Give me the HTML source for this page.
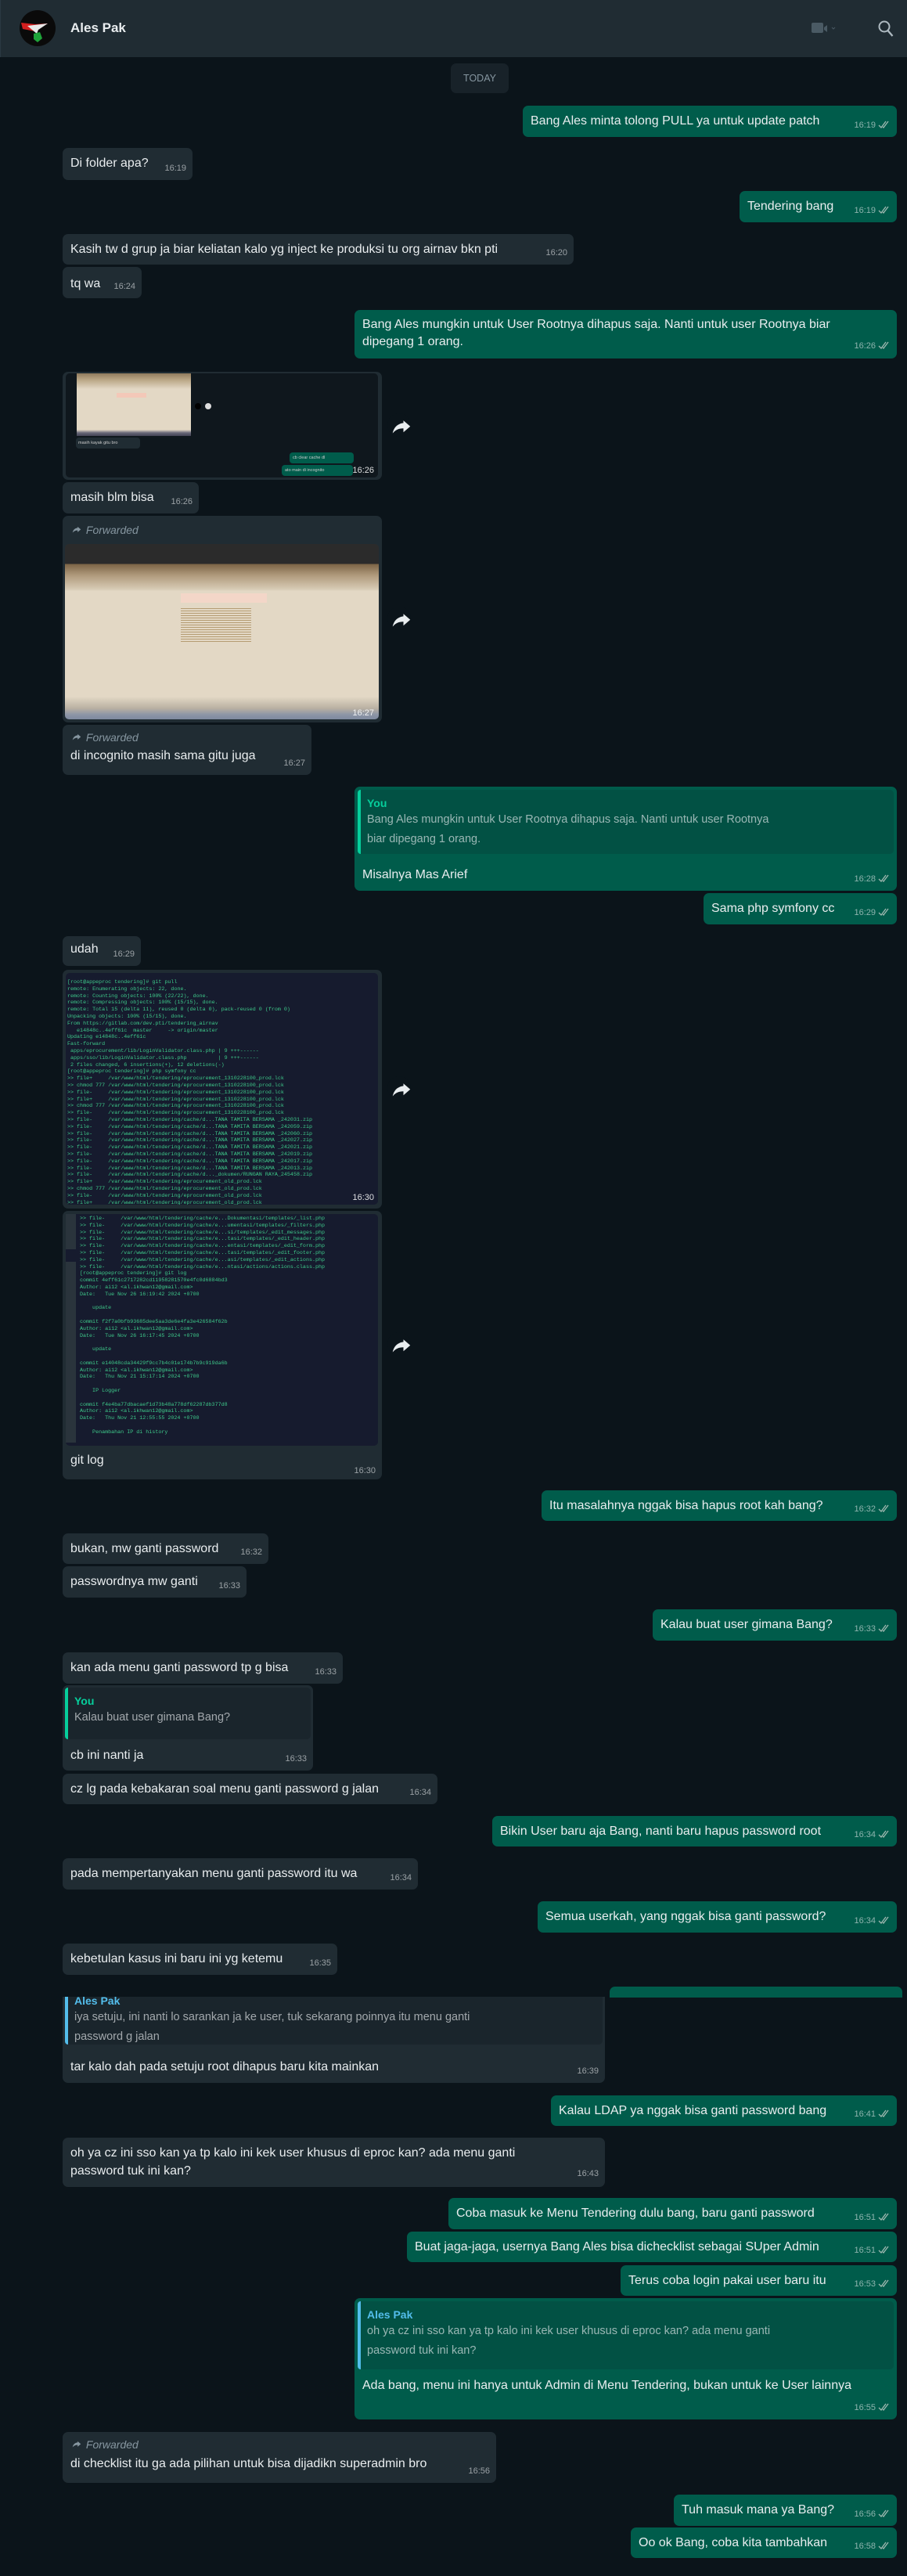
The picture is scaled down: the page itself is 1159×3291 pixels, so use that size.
<!DOCTYPE html>
<html><head><meta charset="utf-8">
<style>
*{box-sizing:border-box;margin:0;padding:0}
body{width:1159px;height:3291px;background:#0b141a;font-family:"Liberation Sans",sans-serif;position:relative;overflow:hidden;color:#e9edef}
.hdr{position:absolute;left:0;top:0;width:1159px;height:73px;background:#202c33;border-left:1px solid #2a3942}
.b{position:absolute;border-radius:7px;font-size:16px;line-height:20px;padding:10px 50px 0 10px;white-space:nowrap}
.in{background:#202c33;left:80px}
.out{background:#005c4b;right:13px}
.t{position:absolute;right:8px;bottom:5px;font-size:11px;color:rgba(233,237,239,.6);white-space:nowrap}
.ck{display:inline-block;vertical-align:-2px;margin-left:3px}
.q{position:absolute;border-radius:5px;padding:8px 10px 0 12px;font-size:14.5px;line-height:25px;color:rgba(233,237,239,.65);white-space:nowrap}
.q:before{content:"";position:absolute;left:0;top:0;bottom:0;width:4px;border-radius:5px 0 0 5px;background:var(--c)}
.qn{font-weight:bold;color:var(--c);font-size:14px;line-height:18px}
.fw{font-style:italic;color:#8696a0;font-size:14px}
.fb{position:absolute;width:30px;height:30px;border-radius:50%;background:#0b141a;left:495px}
.term{position:absolute;background:#161b2e;font-family:"Liberation Mono",monospace;font-size:6.7px;line-height:8.8px;color:#3ec98a;white-space:pre;overflow:hidden}
.bt{position:absolute;font-size:11px;color:rgba(255,255,255,.85)}
</style></head><body>
<svg width="0" height="0" style="position:absolute"><defs>
<symbol id="ck" viewBox="0 0 16 11"><path d="M1 6l3 3 6-8M6 8l1 1 6-8" fill="none" stroke="#9fb8b0" stroke-width="1.3"/></symbol>
<symbol id="fa" viewBox="0 0 24 24"><path d="M14 5l7 6-7 6v-4c-5 0-8 1.5-11 5 1-5 4-9.5 11-10.5z" fill="#e9edef"/></symbol>
</defs></svg>

<div class="hdr">
  <svg style="position:absolute;left:24px;top:13px" width="46" height="46" viewBox="0 0 46 46">
    <circle cx="23" cy="23" r="23" fill="#0a0a0a"/>
    <path d="M2 16l18 2 16-1-14 6-2 4-16-3z" fill="#d21f1f"/>
    <path d="M10 20l26-3-12 8-2 5z" fill="#e8e8e8"/>
    <path d="M18 30l8-2 3 8-6 5-5-4z" fill="#1fa33a"/>
  </svg>
  <div style="position:absolute;left:89px;top:26px;font-size:17px;font-weight:bold;color:#e9edef">Ales Pak</div>
  <svg style="position:absolute;left:1036px;top:27px" width="32" height="18" viewBox="0 0 32 18"><rect x="0" y="2" width="15" height="13" rx="2" fill="#4a5a64"/><path d="M16 8l4-3v9l-4-3z" fill="#4a5a64"/><path d="M26 8l2 2 2-2" stroke="#4a5a64" fill="none" stroke-width="1"/></svg>
  <svg style="position:absolute;left:1120px;top:25px" width="22" height="24" viewBox="0 0 22 24"><circle cx="9" cy="9" r="6.5" fill="none" stroke="#aebac1" stroke-width="2"/><path d="M13.5 14l6 7" stroke="#aebac1" stroke-width="2.3"/></svg>
</div>

<div style="position:absolute;left:576px;top:81px;width:74px;height:38px;background:#182229;border-radius:7px;color:#8696a0;font-size:12.5px;text-align:center;line-height:38px">TODAY</div>

<div class="b out" style="top:135px;width:478px;height:40px">Bang Ales minta tolong PULL ya untuk update patch<span class="t">16:19<svg class="ck" width="16" height="11"><use href="#ck"/></svg></span></div>
<div class="b in" style="top:189px;width:166px;height:41px">Di folder apa?<span class="t">16:19</span></div>
<div class="b out" style="top:244px;width:201px;height:40px">Tendering bang<span class="t">16:19<svg class="ck" width="16" height="11"><use href="#ck"/></svg></span></div>
<div class="b in" style="top:299px;width:653px;height:39px">Kasih tw d grup ja biar keliatan kalo yg inject ke produksi tu org airnav bkn pti<span class="t">16:20</span></div>
<div class="b in" style="top:341px;width:101px;height:40px;padding-top:12px">tq wa<span class="t">16:24</span></div>
<div class="b out" style="top:396px;width:693px;height:62px;line-height:22px;padding-top:8px">Bang Ales mungkin untuk User Rootnya dihapus saja. Nanti untuk user Rootnya biar<br>dipegang 1 orang.<span class="t">16:26<svg class="ck" width="16" height="11"><use href="#ck"/></svg></span></div>

<div style="position:absolute;left:80px;top:475px;width:408px;height:138px;background:#202c33;border-radius:7px">
  <div style="position:absolute;left:4px;top:2px;width:399px;height:133px;background:#0f171d;border-radius:5px;overflow:hidden">
    <div style="position:absolute;left:14px;top:0;width:146px;height:80px;background:linear-gradient(#8f7a5c 0,#b9a584 8px,#e3d8c5 20px,#e3d8c5 72px,#667 76px,#445 80px)"></div>
    <div style="position:absolute;left:65px;top:25px;width:38px;height:6px;background:#f3c8b8"></div>
    <div style="position:absolute;left:13px;top:82px;width:82px;height:14px;background:#202c33;border-radius:4px;font-size:5.5px;color:#ccc;padding:4px 3px">masih kayak gitu bro</div>
    <div style="position:absolute;left:286px;top:101px;width:82px;height:14px;background:#005c4b;border-radius:4px;font-size:5.5px;color:#ccc;padding:4px 4px">cb clear cache dl</div>
    <div style="position:absolute;left:276px;top:117px;width:91px;height:14px;background:#005c4b;border-radius:4px;font-size:5.5px;color:#ccc;padding:4px 4px">ato main di incognito</div>
    <div style="position:absolute;left:165px;top:38px;width:8px;height:8px;border-radius:50%;background:#000"></div>
    <div style="position:absolute;left:178px;top:38px;width:8px;height:8px;border-radius:50%;background:#ddd"></div>
  </div>
  <span class="bt" style="right:10px;bottom:6px">16:26</span>
</div>
<div class="fb" style="top:528px"><svg width="30" height="30" viewBox="-3 -3 30 30"><use href="#fa"/></svg></div>

<div class="b in" style="top:616px;width:174px;height:40px">masih blm bisa<span class="t">16:26</span></div>

<div style="position:absolute;left:80px;top:659px;width:408px;height:264px;background:#202c33;border-radius:7px">
  <div style="position:absolute;left:10px;top:10px" class="fw"><svg width="16" height="14" viewBox="0 0 24 24" style="vertical-align:-2px"><path d="M14 5l7 6-7 6v-4c-5 0-8 1.5-11 5 1-5 4-9.5 11-10.5z" fill="#8696a0"/></svg> Forwarded</div>
  <div style="position:absolute;left:3px;top:36px;width:401px;height:224px;border-radius:5px;overflow:hidden;background:linear-gradient(#2b2b2b 0,#2b2b2b 25px,#7d6547 26px,#b09a7c 40px,#d8ccb6 58px,#e3d8c5 60px,#e3d8c5 195px,#b9b0a2 210px,#8c95a6 218px,#7f8aa0 224px)">
    <div style="position:absolute;left:148px;top:63px;width:110px;height:12px;background:#f3d6c8"></div>
    <div style="position:absolute;left:148px;top:80px;width:90px;height:45px;background:repeating-linear-gradient(#e3d8c5 0,#e3d8c5 2px,#b59c72 2px,#b59c72 3px)"></div>
  </div>
  <span class="bt" style="right:10px;bottom:6px">16:27</span>
</div>
<div class="fb" style="top:775px"><svg width="30" height="30" viewBox="-3 -3 30 30"><use href="#fa"/></svg></div>

<div class="b in" style="top:926px;width:318px;height:64px;padding-top:6px"><div class="fw"><svg width="16" height="14" viewBox="0 0 24 24" style="vertical-align:-2px"><path d="M14 5l7 6-7 6v-4c-5 0-8 1.5-11 5 1-5 4-9.5 11-10.5z" fill="#8696a0"/></svg> Forwarded</div><div style="margin-top:4px">di incognito masih sama gitu juga</div><span class="t">16:27</span></div>

<div class="b out" style="top:1005px;width:693px;height:133px;padding:0">
  <div class="q" style="--c:#06cf9c;left:4px;top:4px;right:4px;height:82px;background:#025144"><div class="qn">You</div>Bang Ales mungkin untuk User Rootnya dihapus saja. Nanti untuk user Rootnya<br>biar dipegang 1 orang.</div>
  <div style="position:absolute;left:10px;top:103px">Misalnya Mas Arief</div>
  <span class="t">16:28<svg class="ck" width="16" height="11"><use href="#ck"/></svg></span>
</div>
<div class="b out" style="top:1141px;width:247px;height:40px">Sama php symfony cc<span class="t">16:29<svg class="ck" width="16" height="11"><use href="#ck"/></svg></span></div>

<div class="b in" style="top:1196px;width:100px;height:38px;padding-top:7px">udah<span class="t">16:29</span></div>

<div style="position:absolute;left:80px;top:1239px;width:408px;height:305px;background:#202c33;border-radius:7px">
<div class="term" style="left:4px;top:4px;width:399px;height:296px;border-radius:5px;padding:8px 2px">[root@appeproc tendering]# git pull
remote: Enumerating objects: 22, done.
remote: Counting objects: 100% (22/22), done.
remote: Compressing objects: 100% (15/15), done.
remote: Total 15 (delta 11), reused 0 (delta 0), pack-reused 0 (from 0)
Unpacking objects: 100% (15/15), done.
From https://gitlab.com/dev.pti/tendering_airnav
   e14848c..4eff61c  master     -> origin/master
Updating e14848c..4eff61c
Fast-forward
 apps/eprocurement/lib/LoginValidator.class.php | 9 +++------
 apps/sso/lib/LoginValidator.class.php          | 9 +++------
 2 files changed, 6 insertions(+), 12 deletions(-)
[root@appeproc tendering]# php symfony cc
>> file+     /var/www/html/tendering/eprocurement_1310228100_prod.lck
>> chmod 777 /var/www/html/tendering/eprocurement_1310228100_prod.lck
>> file-     /var/www/html/tendering/eprocurement_1310228100_prod.lck
>> file+     /var/www/html/tendering/eprocurement_1310228100_prod.lck
>> chmod 777 /var/www/html/tendering/eprocurement_1310228100_prod.lck
>> file-     /var/www/html/tendering/eprocurement_1310228100_prod.lck
>> file-     /var/www/html/tendering/cache/d...TANA TAMITA BERSAMA _242031.zip
>> file-     /var/www/html/tendering/cache/d...TANA TAMITA BERSAMA _242059.zip
>> file-     /var/www/html/tendering/cache/d...TANA TAMITA BERSAMA _242060.zip
>> file-     /var/www/html/tendering/cache/d...TANA TAMITA BERSAMA _242027.zip
>> file-     /var/www/html/tendering/cache/d...TANA TAMITA BERSAMA _242021.zip
>> file-     /var/www/html/tendering/cache/d...TANA TAMITA BERSAMA _242019.zip
>> file-     /var/www/html/tendering/cache/d...TANA TAMITA BERSAMA _242017.zip
>> file-     /var/www/html/tendering/cache/d...TANA TAMITA BERSAMA _242013.zip
>> file-     /var/www/html/tendering/cache/d..._dokumen/RUNGAN RAYA_245458.zip
>> file+     /var/www/html/tendering/eprocurement_old_prod.lck
>> chmod 777 /var/www/html/tendering/eprocurement_old_prod.lck
>> file-     /var/www/html/tendering/eprocurement_old_prod.lck
>> file+     /var/www/html/tendering/eprocurement_old_prod.lck</div>
<span class="bt" style="right:10px;bottom:8px">16:30</span>
</div>
<div class="fb" style="top:1375px"><svg width="30" height="30" viewBox="-3 -3 30 30"><use href="#fa"/></svg></div>

<div style="position:absolute;left:80px;top:1547px;width:408px;height:343px;background:#202c33;border-radius:7px">
<div class="term" style="left:4px;top:4px;width:399px;height:296px;border-radius:5px;padding:2px 2px 0 18px">&gt;&gt; file-     /var/www/html/tendering/cache/e...Dokumentasi/templates/_list.php
&gt;&gt; file-     /var/www/html/tendering/cache/e...umentasi/templates/_filters.php
&gt;&gt; file-     /var/www/html/tendering/cache/e...si/templates/_edit_messages.php
&gt;&gt; file-     /var/www/html/tendering/cache/e...tasi/templates/_edit_header.php
&gt;&gt; file-     /var/www/html/tendering/cache/e...entasi/templates/_edit_form.php
&gt;&gt; file-     /var/www/html/tendering/cache/e...tasi/templates/_edit_footer.php
&gt;&gt; file-     /var/www/html/tendering/cache/e...asi/templates/_edit_actions.php
&gt;&gt; file-     /var/www/html/tendering/cache/e...ntasi/actions/actions.class.php
[root@appeproc tendering]# git log
commit 4eff61c2717282cd11958281570e4fc0d6884bd3
Author: ai12 &lt;al.ikhwan12@gmail.com&gt;
Date:   Tue Nov 26 16:19:42 2024 +0700

    update

commit f2f7a0bfb93685dee5aa3de6e4fa3e426584f62b
Author: ai12 &lt;al.ikhwan12@gmail.com&gt;
Date:   Tue Nov 26 16:17:45 2024 +0700

    update

commit e14048cda34429f9cc7b4c01e174b7b9c919da6b
Author: ai12 &lt;al.ikhwan12@gmail.com&gt;
Date:   Thu Nov 21 15:17:14 2024 +0700

    IP Logger

commit f4e4ba77dbacaef1d73b48a778df62287db377d8
Author: ai12 &lt;al.ikhwan12@gmail.com&gt;
Date:   Thu Nov 21 12:55:55 2024 +0700

    Penambahan IP di history</div>
<div style="position:absolute;left:4px;top:4px;width:13px;height:45px;background:#2a343c"></div>
<div style="position:absolute;left:4px;top:65px;width:13px;height:231px;background:#2a343c"></div>
<div style="position:absolute;left:10px;top:310px;font-size:16px">git log</div>
<span class="t">16:30</span>
</div>
<div class="fb" style="top:1702px"><svg width="30" height="30" viewBox="-3 -3 30 30"><use href="#fa"/></svg></div>

<div class="b out" style="top:1904px;width:454px;height:39px">Itu masalahnya nggak bisa hapus root kah bang?<span class="t">16:32<svg class="ck" width="16" height="11"><use href="#ck"/></svg></span></div>
<div class="b in" style="top:1959px;width:263px;height:39px">bukan, mw ganti password<span class="t">16:32</span></div>
<div class="b in" style="top:2001px;width:235px;height:40px">passwordnya mw ganti<span class="t">16:33</span></div>
<div class="b out" style="top:2056px;width:312px;height:40px">Kalau buat user gimana Bang?<span class="t">16:33<svg class="ck" width="16" height="11"><use href="#ck"/></svg></span></div>
<div class="b in" style="top:2111px;width:358px;height:40px">kan ada menu ganti password tp g bisa<span class="t">16:33</span></div>

<div class="b in" style="top:2153px;width:320px;height:109px;padding:0">
  <div class="q" style="--c:#06cf9c;left:3px;top:3px;right:3px;height:66px;background:#1a252c"><div class="qn">You</div>Kalau buat user gimana Bang?</div>
  <div style="position:absolute;left:10px;top:80px">cb ini nanti ja</div>
  <span class="t">16:33</span>
</div>
<div class="b in" style="top:2266px;width:479px;height:39px">cz lg pada kebakaran soal menu ganti password g jalan<span class="t">16:34</span></div>
<div class="b out" style="top:2320px;width:517px;height:39px">Bikin User baru aja Bang, nanti baru hapus password root<span class="t">16:34<svg class="ck" width="16" height="11"><use href="#ck"/></svg></span></div>
<div class="b in" style="top:2374px;width:454px;height:40px">pada mempertanyakan menu ganti password itu wa<span class="t">16:34</span></div>
<div class="b out" style="top:2429px;width:459px;height:40px">Semua userkah, yang nggak bisa ganti password?<span class="t">16:34<svg class="ck" width="16" height="11"><use href="#ck"/></svg></span></div>
<div class="b in" style="top:2483px;width:351px;height:40px">kebetulan kasus ini baru ini yg ketemu<span class="t">16:35</span></div>

<div style="position:absolute;left:779px;top:2538px;width:374px;height:14px;background:#005c4b;border-radius:7px 7px 0 0"></div>
<div class="b in" style="top:2551px;width:693px;height:110px;padding:0;overflow:hidden;border-radius:0 0 7px 7px">
  <div class="q" style="--c:#53bdeb;left:3px;top:-12px;right:3px;height:73px;background:#1a252c"><div class="qn">Ales Pak</div>iya setuju, ini nanti lo sarankan ja ke user, tuk sekarang poinnya itu menu ganti<br>password g jalan</div>
  <div style="position:absolute;left:10px;top:80px">tar kalo dah pada setuju root dihapus baru kita mainkan</div>
  <span class="t">16:39</span>
</div>

<div class="b out" style="top:2677px;width:442px;height:39px">Kalau LDAP ya nggak bisa ganti password bang<span class="t">16:41<svg class="ck" width="16" height="11"><use href="#ck"/></svg></span></div>
<div class="b in" style="top:2731px;width:693px;height:63px;line-height:23px;padding-top:8px">oh ya cz ini sso kan ya tp kalo ini kek user khusus di eproc kan? ada menu ganti<br>password tuk ini kan?<span class="t">16:43</span></div>
<div class="b out" style="top:2808px;width:573px;height:40px">Coba masuk ke Menu Tendering dulu bang, baru ganti password<span class="t">16:51<svg class="ck" width="16" height="11"><use href="#ck"/></svg></span></div>
<div class="b out" style="top:2851px;width:626px;height:39px">Buat jaga-jaga, usernya Bang Ales bisa dichecklist sebagai SUper Admin<span class="t">16:51<svg class="ck" width="16" height="11"><use href="#ck"/></svg></span></div>
<div class="b out" style="top:2894px;width:353px;height:39px">Terus coba login pakai user baru itu<span class="t">16:53<svg class="ck" width="16" height="11"><use href="#ck"/></svg></span></div>

<div class="b out" style="top:2936px;width:693px;height:155px;padding:0">
  <div class="q" style="--c:#53bdeb;left:4px;top:4px;right:4px;height:87px;background:#025144"><div class="qn">Ales Pak</div>oh ya cz ini sso kan ya tp kalo ini kek user khusus di eproc kan? ada menu ganti<br>password tuk ini kan?</div>
  <div style="position:absolute;left:10px;top:102px">Ada bang, menu ini hanya untuk Admin di Menu Tendering, bukan untuk ke User lainnya</div>
  <span class="t">16:55<svg class="ck" width="16" height="11"><use href="#ck"/></svg></span>
</div>

<div class="b in" style="top:3107px;width:554px;height:65px;padding-top:6px"><div class="fw"><svg width="16" height="14" viewBox="0 0 24 24" style="vertical-align:-2px"><path d="M14 5l7 6-7 6v-4c-5 0-8 1.5-11 5 1-5 4-9.5 11-10.5z" fill="#8696a0"/></svg> Forwarded</div><div style="margin-top:5px">di checklist itu ga ada pilihan untuk bisa dijadikn superadmin bro</div><span class="t">16:56</span></div>
<div class="b out" style="top:3187px;width:285px;height:40px">Tuh masuk mana ya Bang?<span class="t">16:56<svg class="ck" width="16" height="11"><use href="#ck"/></svg></span></div>
<div class="b out" style="top:3229px;width:340px;height:39px">Oo ok Bang, coba kita tambahkan<span class="t">16:58<svg class="ck" width="16" height="11"><use href="#ck"/></svg></span></div>
</body></html>
